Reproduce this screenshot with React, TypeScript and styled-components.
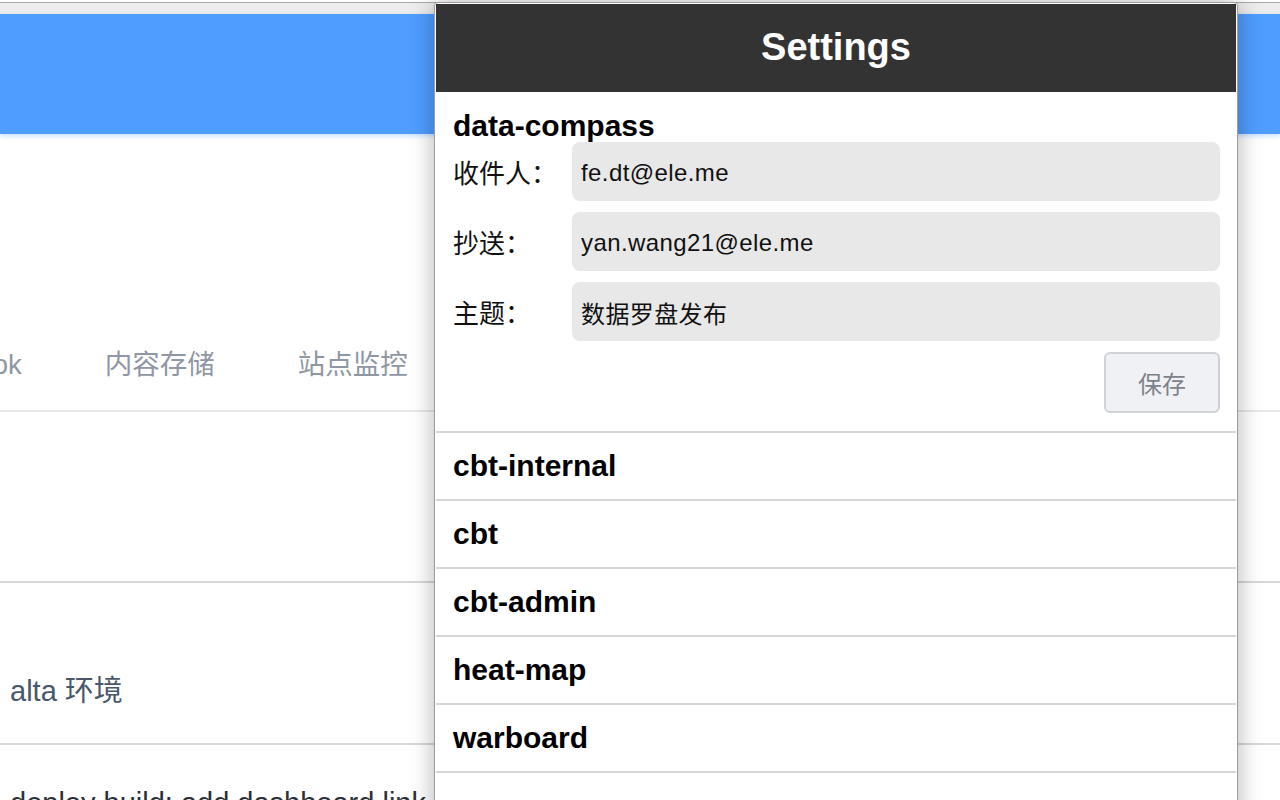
import React from "react";
import styled, { createGlobalStyle } from "styled-components";

const GlobalStyle = createGlobalStyle`
  html, body {
    margin: 0;
    padding: 0;
    background: #ffffff;
  }
  body {
    font-family: "Liberation Sans", "Noto Sans CJK SC", sans-serif;
  }
  * { box-sizing: border-box; }
`;

const Viewport = styled.div`
  position: relative;
  width: 1280px;
  height: 800px;
  overflow: hidden;
  background: #ffffff;
`;

const Page = styled.div`
  display: flex;
  flex-direction: column;
`;

const BrowserStrip = styled.div`
  height: 12px;
  margin-top: 2px;
  border-top: 1px solid #a9a9a9;
  background: #ededed;
`;

const Header = styled.header`
  height: 120px;
  background: #4f9dff;
  box-shadow: 0 2px 5px rgba(79, 157, 255, 0.35);
`;

const Tabs = styled.nav`
  display: flex;
  align-items: center;
  gap: 83px;
  height: 96px;
  margin-top: 182px;
  padding-top: 4px;
  border-bottom: 2px solid #e6e8ec;
`;

const Tab = styled.span<{ $offset?: number }>`
  font-size: 27.5px;
  line-height: 30px;
  color: #8e97a3;
  white-space: nowrap;
  margin-left: ${(p) => (p.$offset ? `${p.$offset}px` : "0")};
`;

const Block = styled.div<{ $height: number; $padTop?: number; $tone?: string }>`
  height: ${(p) => p.$height}px;
  padding: ${(p) => p.$padTop ?? 0}px 0 0 10px;
  border-bottom: 2px solid #d8d8d8;
  font-size: 29px;
  line-height: 32px;
  color: ${(p) => p.$tone ?? "#48576a"};
  white-space: nowrap;
`;

const Popup = styled.div`
  position: absolute;
  left: 434px;
  top: 2px;
  width: 804px;
  height: 820px;
  background: #ffffff;
  border: 1px solid #9c9c9c;
  border-radius: 4px 4px 0 0;
  padding: 1px 1px 0;
  box-shadow: 0 0 24px rgba(0, 0, 0, 0.3);
  display: flex;
  flex-direction: column;
`;

const PopupHeader = styled.div`
  height: 88px;
  background: #333333;
  color: #ffffff;
  display: flex;
  align-items: center;
  justify-content: center;
  font-size: 38px;
  font-weight: 700;
  padding-bottom: 2px;
`;

const Section = styled.section`
  padding: 17px 16px 18px 17px;
  border-bottom: 2px solid #d6d6d6;
  display: flex;
  flex-direction: column;
`;

const SectionTitle = styled.h2`
  margin: 0;
  font-size: 30px;
  line-height: 33px;
  font-weight: 700;
  color: #000000;
`;

const FieldList = styled.div`
  display: flex;
  flex-direction: column;
  gap: 11px;
`;

const Field = styled.label`
  display: flex;
  align-items: center;
`;

const FieldLabel = styled.span`
  width: 119px;
  flex: none;
  font-size: 26px;
  color: #111111;
`;

const FieldInput = styled.input`
  flex: 1;
  height: 59px;
  border: none;
  outline: none;
  border-radius: 8px;
  background: #e8e8e8;
  padding: 2px 9px 0;
  font-family: "Liberation Sans", "Noto Sans CJK SC", sans-serif;
  font-size: 24px;
  letter-spacing: 0.4px;
  color: #111111;
`;

const Actions = styled.div`
  display: flex;
  justify-content: flex-end;
  margin-top: 11px;
`;

const SaveButton = styled.button`
  width: 116px;
  height: 61px;
  border: 2px solid #cfd2d6;
  border-radius: 6px;
  background: #eff1f4;
  color: #7d838b;
  font-family: "Liberation Sans", "Noto Sans CJK SC", sans-serif;
  font-size: 24px;
`;

const ProjectRow = styled.div`
  height: 68px;
  padding-left: 17px;
  display: flex;
  align-items: center;
  border-bottom: 2px solid #d6d6d6;
  font-size: 30px;
  font-weight: 700;
  color: #000000;
  flex: none;
`;

const projects = ["cbt-internal", "cbt", "cbt-admin", "heat-map", "warboard"];

const fields = [
  { label: "收件人：", value: "fe.dt@ele.me" },
  { label: "抄送：", value: "yan.wang21@ele.me" },
  { label: "主题：", value: "数据罗盘发布" },
];

export default function App() {
  return (
    <>
      <GlobalStyle />
      <Viewport>
        <Page>
          <BrowserStrip />
          <Header />
          <Tabs>
            <Tab $offset={-94}>Webhook</Tab>
            <Tab>内容存储</Tab>
            <Tab>站点监控</Tab>
          </Tabs>
          <Block $height={171} />
          <Block $height={162} $padTop={92}>
            alta 环境
          </Block>
          <Block $height={80} $padTop={42} $tone="#2b2f36">
            deploy build: add dashboard link to latest alert sheet
          </Block>
        </Page>
        <Popup>
          <PopupHeader>Settings</PopupHeader>
          <Section>
            <SectionTitle>data-compass</SectionTitle>
            <FieldList>
              {fields.map((f) => (
                <Field key={f.label}>
                  <FieldLabel>{f.label}</FieldLabel>
                  <FieldInput defaultValue={f.value} />
                </Field>
              ))}
            </FieldList>
            <Actions>
              <SaveButton>保存</SaveButton>
            </Actions>
          </Section>
          {projects.map((p) => (
            <ProjectRow key={p}>{p}</ProjectRow>
          ))}
        </Popup>
      </Viewport>
    </>
  );
}
